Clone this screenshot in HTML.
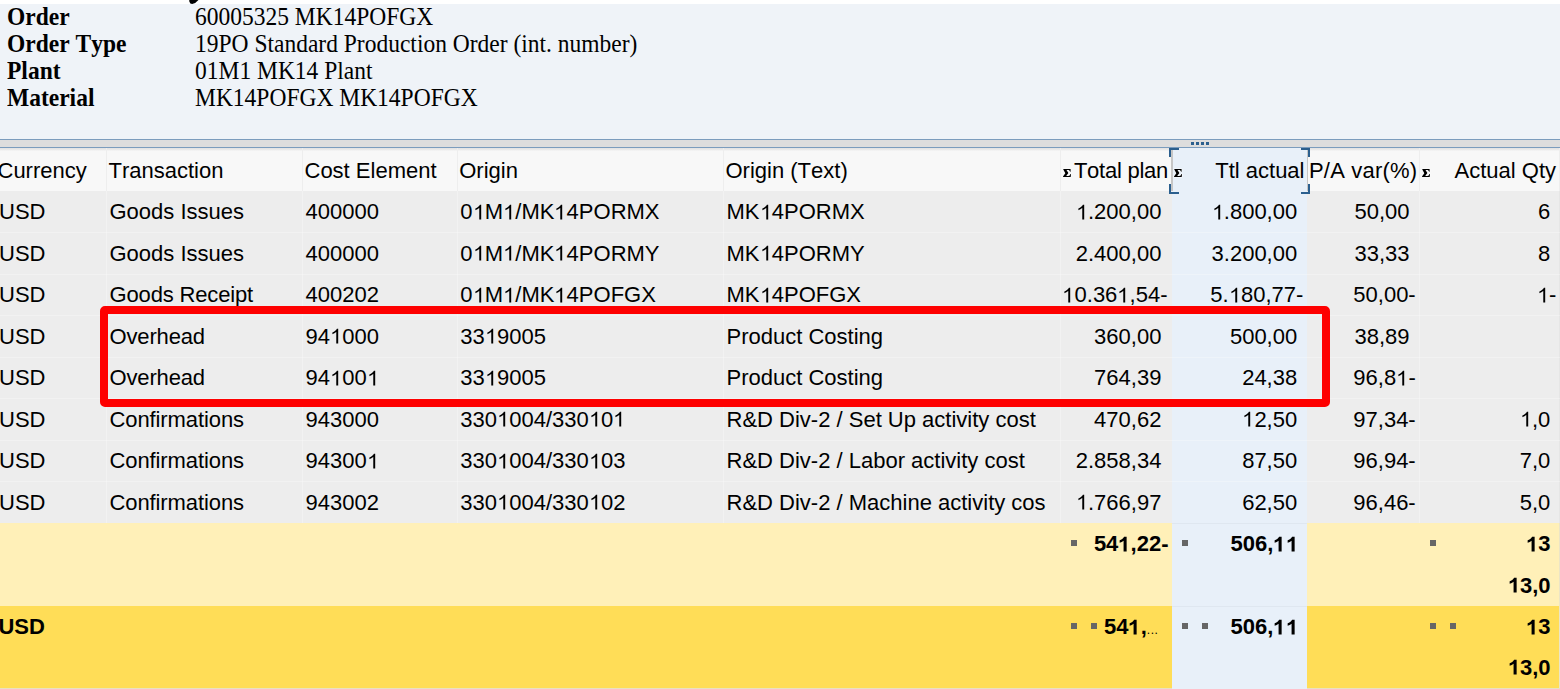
<!DOCTYPE html>
<html><head><meta charset="utf-8"><title>Order cost analysis</title>
<style>
html,body{margin:0;padding:0;}
html{width:1560px;height:689px;overflow:hidden;}
body{width:1560px;height:689px;position:relative;overflow:hidden;background:#fff;
 font-family:"Liberation Sans",sans-serif;font-size:22px;color:#000;font-kerning:none;}
div{position:absolute;box-sizing:border-box;}
.t{white-space:nowrap;line-height:24px;height:24px;}
.r{text-align:right;}
.b{font-weight:bold;}
.s{font-family:"Liberation Serif",serif;font-size:25.6px;line-height:26.8px;height:26.8px;white-space:nowrap;transform:scaleX(0.918);transform-origin:0 0;}
.o{width:.556em;height:.75em;vertical-align:baseline;overflow:visible;}
.sq{width:6px;height:6px;background:#666;}
</style></head><body>

<svg style="position:absolute;left:186px;top:0" width="16" height="6" viewBox="186 0 16 6"><path d="M189.2,-1 L189.4,1.8 Q189.9,4 192.2,4 Q195.8,3.7 199.2,-1 Z" fill="#000"/></svg>
<div style="left:0;top:4px;width:1560px;height:135px;background:#eff3f8"></div>
<div class="s b" style="left:6.6px;top:4.20px">Order</div>
<div class="s" style="left:195.4px;top:4.20px">60005325 MK14POFGX</div>
<div class="s b" style="left:6.6px;top:31.00px">Order Type</div>
<div class="s" style="left:195.4px;top:31.00px">19PO Standard Production Order (int. number)</div>
<div class="s b" style="left:6.6px;top:57.80px">Plant</div>
<div class="s" style="left:195.4px;top:57.80px">01M1 MK14 Plant</div>
<div class="s b" style="left:6.6px;top:84.60px">Material</div>
<div class="s" style="left:195.4px;top:84.60px">MK14POFGX MK14POFGX</div>
<div style="left:0;top:138.7px;width:1560px;height:1.5px;background:#7b9cbd"></div>
<div style="left:0;top:140.2px;width:1560px;height:6.8px;background:#dddddd"></div>
<div style="left:0;top:147px;width:1560px;height:1.3px;background:#7b9cbd"></div>
<div style="left:1191px;top:142px;width:2.5px;height:2.5px;background:#2b5f8e"></div>
<div style="left:1196px;top:142px;width:2.5px;height:2.5px;background:#2b5f8e"></div>
<div style="left:1201px;top:142px;width:2.5px;height:2.5px;background:#2b5f8e"></div>
<div style="left:1206px;top:142px;width:2.5px;height:2.5px;background:#2b5f8e"></div>
<div style="left:0;top:148.3px;width:1560px;height:42.7px;background:#f8f8f8"></div>
<div style="left:0;top:148.3px;width:1560px;height:3px;background:linear-gradient(#e2e2e2,#ebebeb 60%,#f8f8f8)"></div>
<div style="left:0;top:191.0px;width:1560px;height:332.0px;background:#ededed"></div>
<div style="left:0;top:523.0px;width:1559px;height:83.0px;background:#fff0b8"></div>
<div style="left:0;top:606.0px;width:1559px;height:82.0px;background:#ffdd57"></div>
<div style="left:0;top:688px;width:1560px;height:1px;background:#e9e1c2"></div>
<div style="left:1559px;top:523.0px;width:1px;height:165px;background:#ece5c6"></div>
<div style="left:1559px;top:148.3px;width:1px;height:42.7px;background:#eeeeee"></div>
<div style="left:1559px;top:191.0px;width:1px;height:332.0px;background:#e6e6e6"></div>
<div style="left:1172px;top:148px;width:135px;height:541px;background:#e8f0f9"></div>
<div style="left:1172px;top:522.5px;width:135px;height:1px;background:rgba(0,0,0,0.035)"></div>
<div style="left:1172px;top:605.5px;width:135px;height:1px;background:rgba(0,0,0,0.035)"></div>
<div style="left:0;top:232.0px;width:1560px;height:1px;background:rgba(255,255,255,0.28)"></div>
<div style="left:0;top:273.5px;width:1560px;height:1px;background:rgba(255,255,255,0.28)"></div>
<div style="left:0;top:315.0px;width:1560px;height:1px;background:rgba(255,255,255,0.28)"></div>
<div style="left:0;top:356.5px;width:1560px;height:1px;background:rgba(255,255,255,0.28)"></div>
<div style="left:0;top:398.0px;width:1560px;height:1px;background:rgba(255,255,255,0.28)"></div>
<div style="left:0;top:439.5px;width:1560px;height:1px;background:rgba(255,255,255,0.28)"></div>
<div style="left:0;top:481.0px;width:1560px;height:1px;background:rgba(255,255,255,0.28)"></div>
<div style="left:106px;top:148px;width:1px;height:43px;background:#eeeeee"></div>
<div style="left:106px;top:191.0px;width:1px;height:332.0px;background:rgba(255,255,255,0.28)"></div>
<div style="left:302px;top:148px;width:1px;height:43px;background:#eeeeee"></div>
<div style="left:302px;top:191.0px;width:1px;height:332.0px;background:rgba(255,255,255,0.28)"></div>
<div style="left:457px;top:148px;width:1px;height:43px;background:#eeeeee"></div>
<div style="left:457px;top:191.0px;width:1px;height:332.0px;background:rgba(255,255,255,0.28)"></div>
<div style="left:723px;top:148px;width:1px;height:43px;background:#eeeeee"></div>
<div style="left:723px;top:191.0px;width:1px;height:332.0px;background:rgba(255,255,255,0.28)"></div>
<div style="left:1060px;top:148px;width:1px;height:43px;background:#eeeeee"></div>
<div style="left:1060px;top:191.0px;width:1px;height:332.0px;background:rgba(255,255,255,0.28)"></div>
<div style="left:1419px;top:148px;width:1px;height:43px;background:#eeeeee"></div>
<div style="left:1419px;top:191.0px;width:1px;height:332.0px;background:rgba(255,255,255,0.28)"></div>
<div class="t " style="left:-2.5px;top:158.50px">Currency</div>
<div class="t " style="left:108.5px;top:158.50px">Transaction</div>
<div class="t " style="left:304.5px;top:158.50px">Cost Element</div>
<div class="t " style="left:459.25px;top:158.50px">Origin</div>
<div class="t " style="left:725.5px;top:158.50px">Origin (Text)</div>
<div class="t r " style="right:392px;top:158.50px"><span style="letter-spacing:-0.25px">Total plan</span></div>
<div class="t r " style="right:255.5px;top:158.50px">Ttl actual</div>
<div class="t r " style="right:142.70000000000005px;top:158.50px"><span style="letter-spacing:0.2px">P/A var(%)</span></div>
<div class="t r " style="right:4px;top:158.50px">Actual Qty</div>
<svg style="position:absolute;left:1061.9px;top:168px;overflow:visible" width="10" height="10" viewBox="-1 -1 10 10"><path d="M0.3,0 H7.6 V2.7 H7 C6.8,1.5 6.2,0.9 5,0.9 H3.5 L5.4,3.9 L3.2,7 H5.2 C6.5,7 7.1,6.4 7.4,5.1 H8 L7.7,8 H0 V7.5 L2.3,4.3 L0.3,0.5 Z" fill="#000" stroke="#fff" stroke-width="1.2" stroke-opacity="0.7" paint-order="stroke"/></svg>
<svg style="position:absolute;left:1173.1px;top:168px;overflow:visible" width="10" height="10" viewBox="-1 -1 10 10"><path d="M0.3,0 H7.6 V2.7 H7 C6.8,1.5 6.2,0.9 5,0.9 H3.5 L5.4,3.9 L3.2,7 H5.2 C6.5,7 7.1,6.4 7.4,5.1 H8 L7.7,8 H0 V7.5 L2.3,4.3 L0.3,0.5 Z" fill="#000" stroke="#fff" stroke-width="1.2" stroke-opacity="0.7" paint-order="stroke"/></svg>
<svg style="position:absolute;left:1421.0px;top:168px;overflow:visible" width="10" height="10" viewBox="-1 -1 10 10"><path d="M0.3,0 H7.6 V2.7 H7 C6.8,1.5 6.2,0.9 5,0.9 H3.5 L5.4,3.9 L3.2,7 H5.2 C6.5,7 7.1,6.4 7.4,5.1 H8 L7.7,8 H0 V7.5 L2.3,4.3 L0.3,0.5 Z" fill="#000" stroke="#fff" stroke-width="1.2" stroke-opacity="0.7" paint-order="stroke"/></svg>
<div style="left:1171px;top:150px;width:1.5px;height:41px;background:#c6c6c6"></div>
<div style="left:1306.6px;top:150px;width:1.5px;height:41px;background:#c6c6c6"></div>
<div style="left:1169px;top:148px;width:10px;height:2px;background:#2b5f8e"></div>
<div style="left:1169px;top:148px;width:2px;height:9px;background:#2b5f8e"></div>
<div style="left:1169px;top:184px;width:2px;height:10px;background:#2b5f8e"></div>
<div style="left:1169px;top:192px;width:10px;height:2px;background:#2b5f8e"></div>
<div style="left:1300.5px;top:148px;width:9.5px;height:2px;background:#2b5f8e"></div>
<div style="left:1308px;top:148px;width:2px;height:9px;background:#2b5f8e"></div>
<div style="left:1308px;top:184px;width:2px;height:10px;background:#2b5f8e"></div>
<div style="left:1300.5px;top:192px;width:9.5px;height:2px;background:#2b5f8e"></div>
<div class="t " style="left:-1px;top:200.00px">USD</div>
<div class="t " style="left:109.5px;top:200.00px">Goods Issues</div>
<div class="t " style="left:305.5px;top:200.00px">400000</div>
<div class="t " style="left:460.25px;top:200.00px">0<svg class="o" viewBox="0 -800 556 800" preserveAspectRatio="none"><path d="M373,0 H285 V-560 Q253,-530 201,-499 Q150,-469 109,-453 V-538 Q183,-573 238,-622 Q293,-672 316,-719 H373 Z"/></svg>M<svg class="o" viewBox="0 -800 556 800" preserveAspectRatio="none"><path d="M373,0 H285 V-560 Q253,-530 201,-499 Q150,-469 109,-453 V-538 Q183,-573 238,-622 Q293,-672 316,-719 H373 Z"/></svg>/MK<svg class="o" viewBox="0 -800 556 800" preserveAspectRatio="none"><path d="M373,0 H285 V-560 Q253,-530 201,-499 Q150,-469 109,-453 V-538 Q183,-573 238,-622 Q293,-672 316,-719 H373 Z"/></svg>4PORMX</div>
<div class="t " style="left:726.5px;top:200.00px">MK<svg class="o" viewBox="0 -800 556 800" preserveAspectRatio="none"><path d="M373,0 H285 V-560 Q253,-530 201,-499 Q150,-469 109,-453 V-538 Q183,-573 238,-622 Q293,-672 316,-719 H373 Z"/></svg>4PORMX</div>
<div class="t r " style="right:392.5px;top:200.00px"><svg class="o" viewBox="0 -800 556 800" preserveAspectRatio="none"><path d="M373,0 H285 V-560 Q253,-530 201,-499 Q150,-469 109,-453 V-538 Q183,-573 238,-622 Q293,-672 316,-719 H373 Z"/></svg>.200,00&nbsp;</div>
<div class="t r " style="right:256.70000000000005px;top:200.00px"><svg class="o" viewBox="0 -800 556 800" preserveAspectRatio="none"><path d="M373,0 H285 V-560 Q253,-530 201,-499 Q150,-469 109,-453 V-538 Q183,-573 238,-622 Q293,-672 316,-719 H373 Z"/></svg>.800,00&nbsp;</div>
<div class="t r " style="right:144.29999999999995px;top:200.00px">50,00&nbsp;</div>
<div class="t r " style="right:3.599999999999909px;top:200.00px">6&nbsp;</div>
<div class="t " style="left:-1px;top:241.50px">USD</div>
<div class="t " style="left:109.5px;top:241.50px">Goods Issues</div>
<div class="t " style="left:305.5px;top:241.50px">400000</div>
<div class="t " style="left:460.25px;top:241.50px">0<svg class="o" viewBox="0 -800 556 800" preserveAspectRatio="none"><path d="M373,0 H285 V-560 Q253,-530 201,-499 Q150,-469 109,-453 V-538 Q183,-573 238,-622 Q293,-672 316,-719 H373 Z"/></svg>M<svg class="o" viewBox="0 -800 556 800" preserveAspectRatio="none"><path d="M373,0 H285 V-560 Q253,-530 201,-499 Q150,-469 109,-453 V-538 Q183,-573 238,-622 Q293,-672 316,-719 H373 Z"/></svg>/MK<svg class="o" viewBox="0 -800 556 800" preserveAspectRatio="none"><path d="M373,0 H285 V-560 Q253,-530 201,-499 Q150,-469 109,-453 V-538 Q183,-573 238,-622 Q293,-672 316,-719 H373 Z"/></svg>4PORMY</div>
<div class="t " style="left:726.5px;top:241.50px">MK<svg class="o" viewBox="0 -800 556 800" preserveAspectRatio="none"><path d="M373,0 H285 V-560 Q253,-530 201,-499 Q150,-469 109,-453 V-538 Q183,-573 238,-622 Q293,-672 316,-719 H373 Z"/></svg>4PORMY</div>
<div class="t r " style="right:392.5px;top:241.50px">2.400,00&nbsp;</div>
<div class="t r " style="right:256.70000000000005px;top:241.50px">3.200,00&nbsp;</div>
<div class="t r " style="right:144.29999999999995px;top:241.50px">33,33&nbsp;</div>
<div class="t r " style="right:3.599999999999909px;top:241.50px">8&nbsp;</div>
<div class="t " style="left:-1px;top:283.00px">USD</div>
<div class="t " style="left:109.5px;top:283.00px"><span style="letter-spacing:-0.15px">Goods Receipt</span></div>
<div class="t " style="left:305.5px;top:283.00px">400202</div>
<div class="t " style="left:460.25px;top:283.00px">0<svg class="o" viewBox="0 -800 556 800" preserveAspectRatio="none"><path d="M373,0 H285 V-560 Q253,-530 201,-499 Q150,-469 109,-453 V-538 Q183,-573 238,-622 Q293,-672 316,-719 H373 Z"/></svg>M<svg class="o" viewBox="0 -800 556 800" preserveAspectRatio="none"><path d="M373,0 H285 V-560 Q253,-530 201,-499 Q150,-469 109,-453 V-538 Q183,-573 238,-622 Q293,-672 316,-719 H373 Z"/></svg>/MK<svg class="o" viewBox="0 -800 556 800" preserveAspectRatio="none"><path d="M373,0 H285 V-560 Q253,-530 201,-499 Q150,-469 109,-453 V-538 Q183,-573 238,-622 Q293,-672 316,-719 H373 Z"/></svg>4POFGX</div>
<div class="t " style="left:726.5px;top:283.00px">MK<svg class="o" viewBox="0 -800 556 800" preserveAspectRatio="none"><path d="M373,0 H285 V-560 Q253,-530 201,-499 Q150,-469 109,-453 V-538 Q183,-573 238,-622 Q293,-672 316,-719 H373 Z"/></svg>4POFGX</div>
<div class="t r " style="right:392.5px;top:283.00px"><svg class="o" viewBox="0 -800 556 800" preserveAspectRatio="none"><path d="M373,0 H285 V-560 Q253,-530 201,-499 Q150,-469 109,-453 V-538 Q183,-573 238,-622 Q293,-672 316,-719 H373 Z"/></svg>0.36<svg class="o" viewBox="0 -800 556 800" preserveAspectRatio="none"><path d="M373,0 H285 V-560 Q253,-530 201,-499 Q150,-469 109,-453 V-538 Q183,-573 238,-622 Q293,-672 316,-719 H373 Z"/></svg>,54-</div>
<div class="t r " style="right:256.70000000000005px;top:283.00px">5.<svg class="o" viewBox="0 -800 556 800" preserveAspectRatio="none"><path d="M373,0 H285 V-560 Q253,-530 201,-499 Q150,-469 109,-453 V-538 Q183,-573 238,-622 Q293,-672 316,-719 H373 Z"/></svg>80,77-</div>
<div class="t r " style="right:144.29999999999995px;top:283.00px">50,00-</div>
<div class="t r " style="right:3.599999999999909px;top:283.00px"><svg class="o" viewBox="0 -800 556 800" preserveAspectRatio="none"><path d="M373,0 H285 V-560 Q253,-530 201,-499 Q150,-469 109,-453 V-538 Q183,-573 238,-622 Q293,-672 316,-719 H373 Z"/></svg>-</div>
<div class="t " style="left:-1px;top:324.50px">USD</div>
<div class="t " style="left:109.5px;top:324.50px"><span style="letter-spacing:-0.15px">Overhead</span></div>
<div class="t " style="left:305.5px;top:324.50px">94<svg class="o" viewBox="0 -800 556 800" preserveAspectRatio="none"><path d="M373,0 H285 V-560 Q253,-530 201,-499 Q150,-469 109,-453 V-538 Q183,-573 238,-622 Q293,-672 316,-719 H373 Z"/></svg>000</div>
<div class="t " style="left:460.25px;top:324.50px">33<svg class="o" viewBox="0 -800 556 800" preserveAspectRatio="none"><path d="M373,0 H285 V-560 Q253,-530 201,-499 Q150,-469 109,-453 V-538 Q183,-573 238,-622 Q293,-672 316,-719 H373 Z"/></svg>9005</div>
<div class="t " style="left:726.5px;top:324.50px">Product Costing</div>
<div class="t r " style="right:392.5px;top:324.50px">360,00&nbsp;</div>
<div class="t r " style="right:256.70000000000005px;top:324.50px">500,00&nbsp;</div>
<div class="t r " style="right:144.29999999999995px;top:324.50px">38,89&nbsp;</div>
<div class="t " style="left:-1px;top:366.00px">USD</div>
<div class="t " style="left:109.5px;top:366.00px"><span style="letter-spacing:-0.15px">Overhead</span></div>
<div class="t " style="left:305.5px;top:366.00px">94<svg class="o" viewBox="0 -800 556 800" preserveAspectRatio="none"><path d="M373,0 H285 V-560 Q253,-530 201,-499 Q150,-469 109,-453 V-538 Q183,-573 238,-622 Q293,-672 316,-719 H373 Z"/></svg>00<svg class="o" viewBox="0 -800 556 800" preserveAspectRatio="none"><path d="M373,0 H285 V-560 Q253,-530 201,-499 Q150,-469 109,-453 V-538 Q183,-573 238,-622 Q293,-672 316,-719 H373 Z"/></svg></div>
<div class="t " style="left:460.25px;top:366.00px">33<svg class="o" viewBox="0 -800 556 800" preserveAspectRatio="none"><path d="M373,0 H285 V-560 Q253,-530 201,-499 Q150,-469 109,-453 V-538 Q183,-573 238,-622 Q293,-672 316,-719 H373 Z"/></svg>9005</div>
<div class="t " style="left:726.5px;top:366.00px">Product Costing</div>
<div class="t r " style="right:392.5px;top:366.00px">764,39&nbsp;</div>
<div class="t r " style="right:256.70000000000005px;top:366.00px">24,38&nbsp;</div>
<div class="t r " style="right:144.29999999999995px;top:366.00px">96,8<svg class="o" viewBox="0 -800 556 800" preserveAspectRatio="none"><path d="M373,0 H285 V-560 Q253,-530 201,-499 Q150,-469 109,-453 V-538 Q183,-573 238,-622 Q293,-672 316,-719 H373 Z"/></svg>-</div>
<div class="t " style="left:-1px;top:407.50px">USD</div>
<div class="t " style="left:109.5px;top:407.50px"><span style="letter-spacing:-0.1px">Confirmations</span></div>
<div class="t " style="left:305.5px;top:407.50px">943000</div>
<div class="t " style="left:460.25px;top:407.50px">330<svg class="o" viewBox="0 -800 556 800" preserveAspectRatio="none"><path d="M373,0 H285 V-560 Q253,-530 201,-499 Q150,-469 109,-453 V-538 Q183,-573 238,-622 Q293,-672 316,-719 H373 Z"/></svg>004/330<svg class="o" viewBox="0 -800 556 800" preserveAspectRatio="none"><path d="M373,0 H285 V-560 Q253,-530 201,-499 Q150,-469 109,-453 V-538 Q183,-573 238,-622 Q293,-672 316,-719 H373 Z"/></svg>0<svg class="o" viewBox="0 -800 556 800" preserveAspectRatio="none"><path d="M373,0 H285 V-560 Q253,-530 201,-499 Q150,-469 109,-453 V-538 Q183,-573 238,-622 Q293,-672 316,-719 H373 Z"/></svg></div>
<div class="t " style="left:726.5px;top:407.50px">R&amp;D Div-2 / Set Up activity cost</div>
<div class="t r " style="right:392.5px;top:407.50px">470,62&nbsp;</div>
<div class="t r " style="right:256.70000000000005px;top:407.50px"><svg class="o" viewBox="0 -800 556 800" preserveAspectRatio="none"><path d="M373,0 H285 V-560 Q253,-530 201,-499 Q150,-469 109,-453 V-538 Q183,-573 238,-622 Q293,-672 316,-719 H373 Z"/></svg>2,50&nbsp;</div>
<div class="t r " style="right:144.29999999999995px;top:407.50px">97,34-</div>
<div class="t r " style="right:3.599999999999909px;top:407.50px"><svg class="o" viewBox="0 -800 556 800" preserveAspectRatio="none"><path d="M373,0 H285 V-560 Q253,-530 201,-499 Q150,-469 109,-453 V-538 Q183,-573 238,-622 Q293,-672 316,-719 H373 Z"/></svg>,0&nbsp;</div>
<div class="t " style="left:-1px;top:449.00px">USD</div>
<div class="t " style="left:109.5px;top:449.00px"><span style="letter-spacing:-0.1px">Confirmations</span></div>
<div class="t " style="left:305.5px;top:449.00px">94300<svg class="o" viewBox="0 -800 556 800" preserveAspectRatio="none"><path d="M373,0 H285 V-560 Q253,-530 201,-499 Q150,-469 109,-453 V-538 Q183,-573 238,-622 Q293,-672 316,-719 H373 Z"/></svg></div>
<div class="t " style="left:460.25px;top:449.00px">330<svg class="o" viewBox="0 -800 556 800" preserveAspectRatio="none"><path d="M373,0 H285 V-560 Q253,-530 201,-499 Q150,-469 109,-453 V-538 Q183,-573 238,-622 Q293,-672 316,-719 H373 Z"/></svg>004/330<svg class="o" viewBox="0 -800 556 800" preserveAspectRatio="none"><path d="M373,0 H285 V-560 Q253,-530 201,-499 Q150,-469 109,-453 V-538 Q183,-573 238,-622 Q293,-672 316,-719 H373 Z"/></svg>03</div>
<div class="t " style="left:726.5px;top:449.00px">R&amp;D Div-2 / Labor activity cost</div>
<div class="t r " style="right:392.5px;top:449.00px">2.858,34&nbsp;</div>
<div class="t r " style="right:256.70000000000005px;top:449.00px">87,50&nbsp;</div>
<div class="t r " style="right:144.29999999999995px;top:449.00px">96,94-</div>
<div class="t r " style="right:3.599999999999909px;top:449.00px">7,0&nbsp;</div>
<div class="t " style="left:-1px;top:490.50px">USD</div>
<div class="t " style="left:109.5px;top:490.50px"><span style="letter-spacing:-0.1px">Confirmations</span></div>
<div class="t " style="left:305.5px;top:490.50px">943002</div>
<div class="t " style="left:460.25px;top:490.50px">330<svg class="o" viewBox="0 -800 556 800" preserveAspectRatio="none"><path d="M373,0 H285 V-560 Q253,-530 201,-499 Q150,-469 109,-453 V-538 Q183,-573 238,-622 Q293,-672 316,-719 H373 Z"/></svg>004/330<svg class="o" viewBox="0 -800 556 800" preserveAspectRatio="none"><path d="M373,0 H285 V-560 Q253,-530 201,-499 Q150,-469 109,-453 V-538 Q183,-573 238,-622 Q293,-672 316,-719 H373 Z"/></svg>02</div>
<div class="t " style="left:726.5px;top:490.50px">R&amp;D Div-2 / Machine activity cos</div>
<div class="t r " style="right:392.5px;top:490.50px"><svg class="o" viewBox="0 -800 556 800" preserveAspectRatio="none"><path d="M373,0 H285 V-560 Q253,-530 201,-499 Q150,-469 109,-453 V-538 Q183,-573 238,-622 Q293,-672 316,-719 H373 Z"/></svg>.766,97&nbsp;</div>
<div class="t r " style="right:256.70000000000005px;top:490.50px">62,50&nbsp;</div>
<div class="t r " style="right:144.29999999999995px;top:490.50px">96,46-</div>
<div class="t r " style="right:3.599999999999909px;top:490.50px">5,0&nbsp;</div>
<div class="t r b" style="right:391.5px;top:532.00px">54<svg class="o" viewBox="0 -800 556 800" preserveAspectRatio="none"><path d="M393,0 H254 V-524 Q178,-453 75,-419 V-545 Q129,-563 193,-612 Q256,-661 280,-716 H393 Z"/></svg>,22-</div>
<div class="t r b" style="right:256px;top:532.00px">506,<svg class="o" viewBox="0 -800 556 800" preserveAspectRatio="none"><path d="M393,0 H254 V-524 Q178,-453 75,-419 V-545 Q129,-563 193,-612 Q256,-661 280,-716 H393 Z"/></svg><svg class="o" viewBox="0 -800 556 800" preserveAspectRatio="none"><path d="M393,0 H254 V-524 Q178,-453 75,-419 V-545 Q129,-563 193,-612 Q256,-661 280,-716 H393 Z"/></svg>&nbsp;</div>
<div class="t r b" style="right:3.400000000000091px;top:532.00px"><svg class="o" viewBox="0 -800 556 800" preserveAspectRatio="none"><path d="M393,0 H254 V-524 Q178,-453 75,-419 V-545 Q129,-563 193,-612 Q256,-661 280,-716 H393 Z"/></svg>3&nbsp;</div>
<div class="t r b" style="right:3.400000000000091px;top:573.50px"><svg class="o" viewBox="0 -800 556 800" preserveAspectRatio="none"><path d="M393,0 H254 V-524 Q178,-453 75,-419 V-545 Q129,-563 193,-612 Q256,-661 280,-716 H393 Z"/></svg>3,0&nbsp;</div>
<div class="t b" style="left:-1.6px;top:615.00px">USD</div>
<div class="t b" style="left:1104px;top:615.00px">54<svg class="o" viewBox="0 -800 556 800" preserveAspectRatio="none"><path d="M393,0 H254 V-524 Q178,-453 75,-419 V-545 Q129,-563 193,-612 Q256,-661 280,-716 H393 Z"/></svg>,<span style="font-weight:normal;font-size:12px;letter-spacing:0.5px">...</span></div>
<div class="t r b" style="right:256px;top:615.00px">506,<svg class="o" viewBox="0 -800 556 800" preserveAspectRatio="none"><path d="M393,0 H254 V-524 Q178,-453 75,-419 V-545 Q129,-563 193,-612 Q256,-661 280,-716 H393 Z"/></svg><svg class="o" viewBox="0 -800 556 800" preserveAspectRatio="none"><path d="M393,0 H254 V-524 Q178,-453 75,-419 V-545 Q129,-563 193,-612 Q256,-661 280,-716 H393 Z"/></svg>&nbsp;</div>
<div class="t r b" style="right:3.400000000000091px;top:615.00px"><svg class="o" viewBox="0 -800 556 800" preserveAspectRatio="none"><path d="M393,0 H254 V-524 Q178,-453 75,-419 V-545 Q129,-563 193,-612 Q256,-661 280,-716 H393 Z"/></svg>3&nbsp;</div>
<div class="t r b" style="right:3.400000000000091px;top:655.50px"><svg class="o" viewBox="0 -800 556 800" preserveAspectRatio="none"><path d="M393,0 H254 V-524 Q178,-453 75,-419 V-545 Q129,-563 193,-612 Q256,-661 280,-716 H393 Z"/></svg>3,0&nbsp;</div>
<div class="sq" style="left:1071px;top:539.8px"></div>
<div class="sq" style="left:1182px;top:539.8px"></div>
<div class="sq" style="left:1429.5px;top:539.8px"></div>
<div class="sq" style="left:1071px;top:623px"></div>
<div class="sq" style="left:1090.5px;top:623px"></div>
<div class="sq" style="left:1182px;top:623px"></div>
<div class="sq" style="left:1202px;top:623px"></div>
<div class="sq" style="left:1429.5px;top:623px"></div>
<div class="sq" style="left:1449.5px;top:623px"></div>
<div style="left:100px;top:306px;width:1230px;height:101px;border:8px solid #fe0000;border-radius:5px;"></div>
</body></html>
